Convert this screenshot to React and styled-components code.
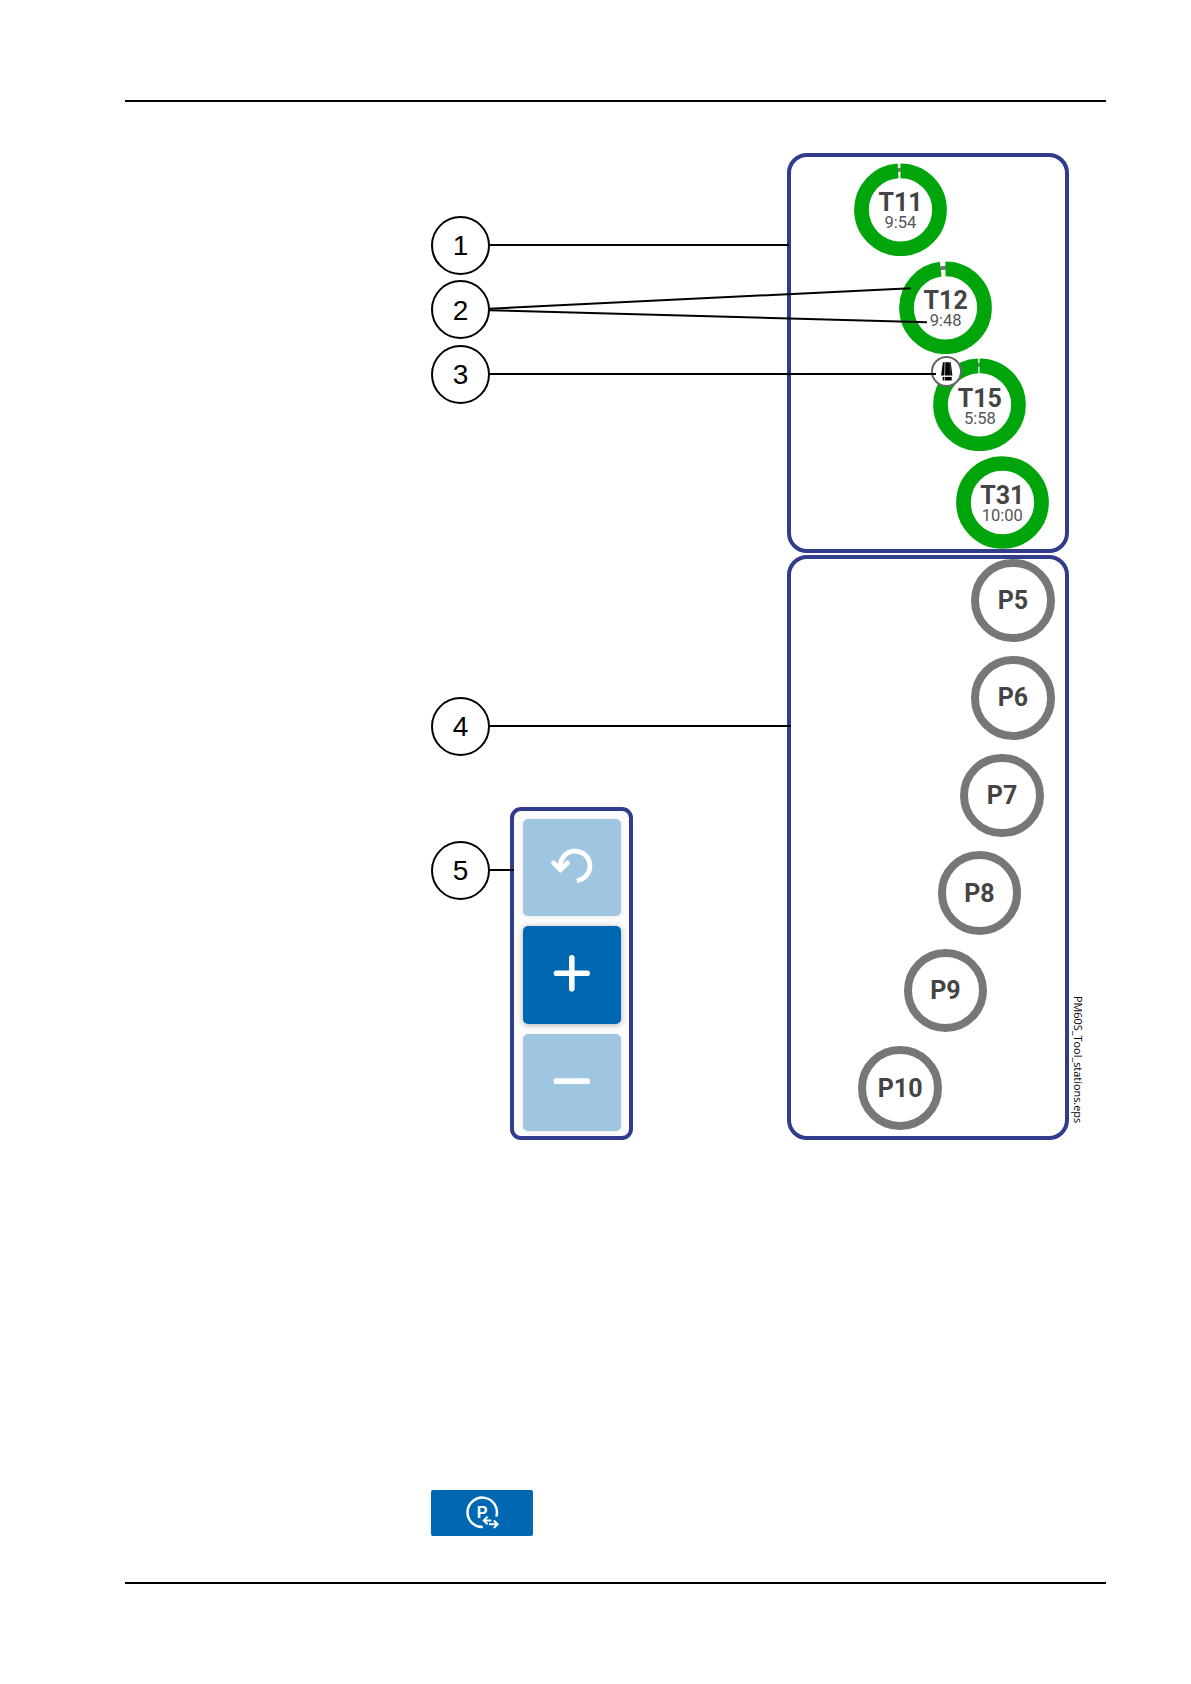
import React from 'react'
import styled, { createGlobalStyle } from 'styled-components'

const colors = {
  frame: '#313c8c',
  active: '#00a50b',
  track: '#777777',
  label: '#444444',
  primary: '#0068b3',
  disabled: '#9fc6e1',
}

const GlobalStyle = createGlobalStyle`
  * {
    box-sizing: border-box;
  }
  body {
    margin: 0;
    background: #ffffff;
  }
`

const Page = styled.main`
  display: flex;
  flex-direction: column;
  width: 1191px;
  height: 1684px;
  padding: 100px 85.5px 0 124.5px;
  overflow: hidden;
`

const Rule = styled.hr`
  flex: none;
  width: 100%;
  height: 2px;
  margin: 0;
  border: none;
  background: #000000;
`

const Figure = styled.figure`
  position: relative;
  display: flex;
  align-items: flex-end;
  flex: none;
  width: 660px;
  height: 987px;
  margin: 51px 0 0 306.5px;
`

const CalloutColumn = styled.div`
  display: flex;
  flex-direction: column;
  align-self: flex-start;
  width: 59px;
  padding-top: 62.7px;
  margin-right: 20.4px;
`

const Callout = styled.div`
  display: flex;
  align-items: center;
  justify-content: center;
  width: 59px;
  height: 59px;
  margin-bottom: ${(props) => props.$gap || 0}px;
  padding-top: 2px;
  border: 2px solid #000000;
  border-radius: 50%;
  font: 28px 'Liberation Sans', Arial, sans-serif;
  color: #000000;
`

const Toolbar = styled.div`
  display: flex;
  flex-direction: column;
  align-items: center;
  gap: 10px;
  width: 123px;
  height: 333px;
  padding-top: 7.5px;
  border: 4px solid ${colors.frame};
  border-radius: 11px;
  background: #fdfcfc;
`

const ToolButton = styled.button`
  flex: none;
  width: 97.5px;
  height: 97.5px;
  padding: 0;
  border: none;
  border-radius: 5px;
  background: ${(props) => (props.disabled ? colors.disabled : colors.primary)};
  box-shadow: ${(props) =>
    props.disabled
      ? '0 1px 5px rgba(0, 0, 0, 0.08)'
      : '0 1px 6px rgba(0, 0, 0, 0.3)'};
  & svg {
    display: block;
  }
`

const StationColumn = styled.div`
  display: flex;
  flex-direction: column;
  align-self: flex-start;
  gap: 1.5px;
  width: 282px;
  margin-left: 153.6px;
`

const StationPanel = styled.section`
  display: flex;
  flex-direction: column;
  gap: ${(props) => props.$gap}px;
  width: 282px;
  height: ${(props) => props.$height}px;
  padding-top: ${(props) => props.$top}px;
  border: 4px solid ${colors.frame};
  border-radius: 20px;
`

const Station = styled.div`
  position: relative;
  display: flex;
  flex-direction: column;
  align-items: center;
  flex: none;
  width: 93px;
  height: 93px;
  margin-left: ${(props) => props.$shift}px;
  padding-top: 29.2px;
  font-family: Roboto, sans-serif;
  color: ${colors.label};
`

const StationRing = styled.svg`
  position: absolute;
  inset: 0;
`

const StationName = styled.span`
  position: relative;
  font-size: 25px;
  font-weight: 700;
  line-height: 22px;
`

const StationTime = styled.span`
  position: relative;
  font-size: 16.5px;
  line-height: 17px;
  color: #555555;
`

const Badge = styled.span`
  position: absolute;
  top: -2px;
  left: -2.5px;
  width: 31px;
  height: 31px;
  border: 2px solid #666666;
  border-radius: 50%;
  background: #ffffff;
  & svg {
    display: block;
    width: 27px;
    height: 27px;
  }
`

const ParkedStation = styled.div`
  display: flex;
  align-items: center;
  justify-content: center;
  flex: none;
  width: 83.6px;
  height: 83.6px;
  margin-left: ${(props) => props.$shift}px;
  border: 8.4px solid ${colors.track};
  border-radius: 50%;
  font: 700 25px Roboto, sans-serif;
  color: ${colors.label};
`

const FileName = styled.figcaption`
  align-self: flex-end;
  margin: 0 0 17px 2px;
  writing-mode: vertical-rl;
  white-space: nowrap;
  font: 10.9px/14px 'Open Sans', 'Noto Sans', sans-serif;
  color: #000000;
`

// Lines going from the callouts to the parts they explain
const Leaders = styled.svg`
  position: absolute;
  top: 0;
  left: 0;
  pointer-events: none;
`

const SwapButton = styled.button`
  flex: none;
  width: 102px;
  height: 46px;
  margin: 349.7px 0 46.3px 306.2px;
  padding: 0;
  border: none;
  border-radius: 2px;
  background: ${colors.primary};
  & svg {
    display: block;
  }
`

const callouts = [
  { number: 1, gap: 5.6 },
  { number: 2, gap: 5.4 },
  { number: 3, gap: 293 },
  { number: 4, gap: 85.3 },
  { number: 5 },
]

const activeStations = [
  { name: 'T11', time: '9:54', remaining: 0.99, shift: 63 },
  { name: 'T12', time: '9:48', remaining: 0.98, shift: 108.2 },
  { name: 'T15', time: '5:58', remaining: 0.9945, shift: 142.4, hasTool: true },
  { name: 'T31', time: '10:00', remaining: 1, shift: 164.8 },
]

const parkedStations = [
  { name: 'P5', shift: 180.2 },
  { name: 'P6', shift: 180.2 },
  { name: 'P7', shift: 169.3 },
  { name: 'P8', shift: 146.7 },
  { name: 'P9', shift: 112.6 },
  { name: 'P10', shift: 67.3 },
]

const ToolIcon = () => (
  <svg viewBox="0 0 28 28">
    <path d="M10.2 4.5h8.2l1.7 13.7H8.4z" fill="#000" />
    <path d="M10 19.6h9.4v3.7H10z" fill="#000" />
    <path d="M12.5 4.5l-.7 19" stroke="#fff" strokeWidth="0.7" />
    <path d="M17.3 4.5l.8 13.7" stroke="#888" strokeWidth="0.5" />
  </svg>
)

const ActiveStation = ({ name, time, remaining, shift, hasTool }) => (
  <Station $shift={shift}>
    <StationRing width="93" height="93" viewBox="0 0 93 93">
      <circle cx="46.5" cy="46.8" r="40" fill="none" stroke={colors.track} strokeWidth="4" />
      {remaining < 1 && (
        <circle
          cx="46.5"
          cy="46.8"
          r="39"
          fill="none"
          stroke={colors.active}
          strokeWidth="14.7"
          pathLength="1"
          strokeDasharray={`${remaining} 1`}
          transform="rotate(-90 46.5 46.8)"
        />
      )}
      {remaining === 1 && (
        <circle cx="46.5" cy="46.5" r="39" fill="none" stroke={colors.active} strokeWidth="14.7" />
      )}
    </StationRing>
    <StationName>{name}</StationName>
    <StationTime>{time}</StationTime>
    {hasTool && (
      <Badge>
        <ToolIcon />
      </Badge>
    )}
  </Station>
)

const UndoIcon = () => (
  <svg width="97.5" height="97.5" viewBox="0 0 97.5 97.5" fill="none" stroke="#fff" strokeWidth="4.8">
    <path d="M37.5 49A14.8 14.8 0 1 1 53.8 61.6" strokeLinecap="butt" />
    <path d="M30.6 44l6.9 6.6 7-6.6" strokeLinecap="round" strokeLinejoin="miter" />
  </svg>
)

const PlusIcon = () => (
  <svg width="97.5" height="97.5" viewBox="0 0 97.5 97.5" stroke="#fff" strokeWidth="5.6" strokeLinecap="round">
    <path d="M33.4 47.3h30.8M48.8 31.9v30.8" />
  </svg>
)

const MinusIcon = () => (
  <svg width="97.5" height="97.5" viewBox="0 0 97.5 97.5" stroke="#fff" strokeWidth="5.8" strokeLinecap="round">
    <path d="M33.4 47.2h30.8" />
  </svg>
)

const SwapIcon = () => (
  <svg width="102" height="46" viewBox="0 0 102 46" fill="none" stroke="#fff" strokeWidth="2.5">
    <path d="M65.3 26.6A14.7 14.7 0 1 0 51.8 37" />
    <path d="M60.3 30.4h-7M56.6 26.6l-3.8 3.8 3.8 3.8M58 34.3h8M62.8 30.5l3.8 3.8-3.8 3.8" strokeWidth="2" />
    <text
      x="51"
      y="28.2"
      textAnchor="middle"
      fontFamily="Liberation Sans, Arial, sans-serif"
      fontSize="16"
      fontWeight="700"
      fill="#fff"
      stroke="none"
    >
      P
    </text>
  </svg>
)

const App = () => {
  return (
    <Page>
      <GlobalStyle />
      <Rule />
      <Figure>
        <CalloutColumn>
          {callouts.map(({ number, gap }) => (
            <Callout key={number} $gap={gap}>
              {number}
            </Callout>
          ))}
        </CalloutColumn>
        <Toolbar>
          <ToolButton disabled aria-label="Undo">
            <UndoIcon />
          </ToolButton>
          <ToolButton aria-label="Add">
            <PlusIcon />
          </ToolButton>
          <ToolButton disabled aria-label="Remove">
            <MinusIcon />
          </ToolButton>
        </Toolbar>
        <StationColumn>
          <StationPanel $height={400} $top={6.3} $gap={4.6}>
            {activeStations.map((station) => (
              <ActiveStation key={station.name} {...station} />
            ))}
          </StationPanel>
          <StationPanel $height={585.5} $top={0} $gap={14}>
            {parkedStations.map(({ name, shift }) => (
              <ParkedStation key={name} $shift={shift}>
                {name}
              </ParkedStation>
            ))}
          </StationPanel>
        </StationColumn>
        <FileName>PM60S_Tool_stations.eps</FileName>
        <Leaders width="660" height="987" viewBox="0 0 660 987" stroke="#000" strokeWidth="2">
          <path d="M58 92H358" />
          <path d="M58 155.7L479.7 135.2" />
          <path d="M58 157.3L496 169.2" />
          <path d="M58 221H505" />
          <path d="M58 573H360" />
          <path d="M58 717H83" />
        </Leaders>
      </Figure>
      <SwapButton aria-label="Swap pallets">
        <SwapIcon />
      </SwapButton>
      <Rule />
    </Page>
  )
}

export default App
